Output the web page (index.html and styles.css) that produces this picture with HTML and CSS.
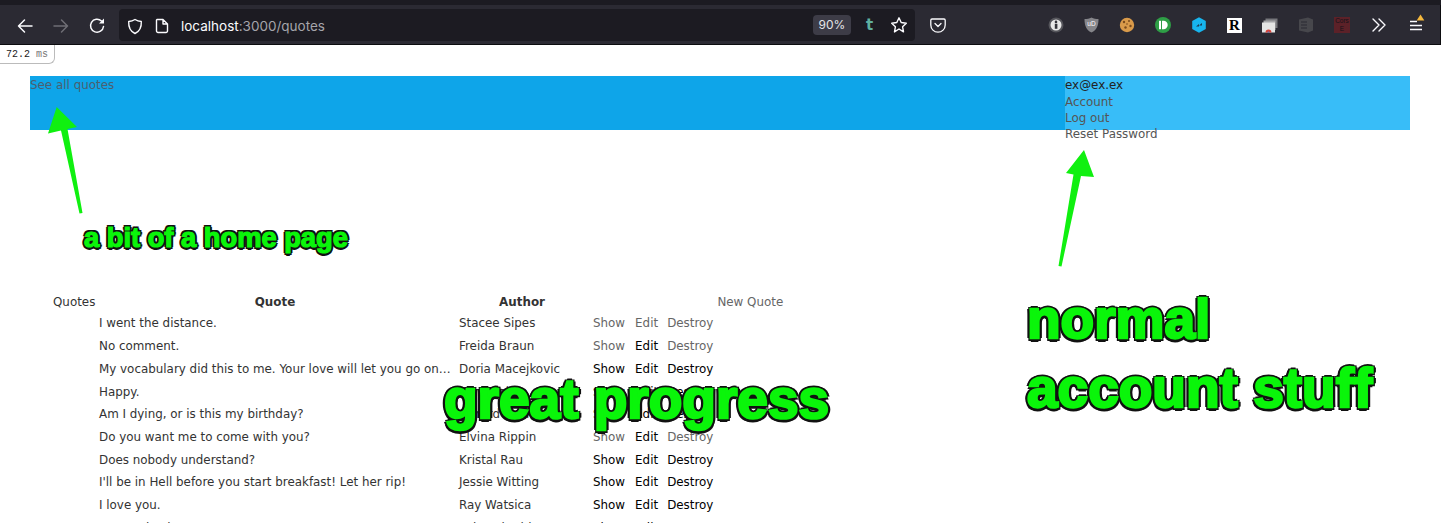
FILE: index.html
```html
<!DOCTYPE html>
<html lang="en">
<head>
    <meta charset="UTF-8">
    <meta name="viewport" content="width=device-width, initial-scale=1.0">
    <title>Quotes</title>
    <link rel="stylesheet" href="styles.css">
</head>
<body>
    <!-- browser chrome -->
    <div class="tabstrip"></div>
    <div class="toolbar">
        <svg class="tool first" width="18" height="18" viewBox="0 0 18 18" fill="none" stroke="#fbfbfe" stroke-width="1.5" stroke-linecap="round" stroke-linejoin="round"><path d="M16 9H2.5M8.5 3L2.5 9l6 6"/></svg>
        <svg class="tool" width="18" height="18" viewBox="0 0 18 18" fill="none" stroke="#6f6e75" stroke-width="1.5" stroke-linecap="round" stroke-linejoin="round"><path d="M2 9h13.5M9.500 3l6 6-6 6"/></svg>
        <svg class="tool" width="18" height="18" viewBox="0 0 18 18" fill="none" stroke="#fbfbfe" stroke-width="1.5" stroke-linecap="round"><path d="M15.5 9.5a6.5 6.5 0 1 1-2-5.500"/><path d="M16 1.500V6.500H11z" fill="#fbfbfe" stroke="none"/></svg>

        <div class="urlbar">
            <svg class="url-icon" width="16" height="17" viewBox="0 0 16 17" fill="none" stroke="#fbfbfe" stroke-width="1.4" stroke-linejoin="round"><path d="M8 1.5c2 1.300 4 1.900 6.300 2 .3 5.500-1.500 9.800-6.300 12-4.800-2.200-6.600-6.500-6.300-12 2.300-.1 4.300-.7 6.300-2z"/></svg>
            <svg class="url-icon" width="14" height="16" viewBox="0 0 14 16" fill="none" stroke="#fbfbfe" stroke-width="1.4" stroke-linejoin="round"><path d="M2 1.5h6l4.500 4.500v7a1.500 1.500 0 0 1-1.500 1.500H3A1.500 1.500 0 0 1 1.500 13V2zM8 1.500V6h4.500"/></svg>
            <div class="url-text">localhost<span class="url-dim">:3000/quotes</span></div>
            <div class="zoom-badge">90%</div>
            <div class="t-ext">t</div>
            <svg class="star" width="18" height="18" viewBox="0 0 18 18" fill="none" stroke="#fbfbfe" stroke-width="1.4" stroke-linejoin="round"><path d="M9 1.800l2.200 4.700 5.100.7-3.700 3.600.9 5.100L9 13l-4.500 2.900.9-5.100L1.700 7.200l5.100-.7z"/></svg>
        </div>

        <svg class="pocket" width="16" height="15" viewBox="0 0 16 15" fill="none" stroke="#fbfbfe" stroke-width="1.3" stroke-linecap="round" stroke-linejoin="round"><path d="M2 1h12a1.200 1.200 0 0 1 1.200 1.200V7a7.200 7.200 0 0 1-14.400 0V2.200A1.200 1.200 0 0 1 2 1z"/><path d="M5 5.500l3 3 3-3"/></svg>

        <div class="extensions">
            <svg width="16" height="16" viewBox="0 0 16 16"><circle cx="8" cy="8" r="7.500" fill="#55555b"/><circle cx="8" cy="8" r="5.500" fill="#e8e8e8"/><rect x="6.800" y="6.800" width="2.600" height="5" fill="#33333a"/><circle cx="8" cy="4.900" r="1.300" fill="#33333a"/></svg>
            <svg width="15" height="16" viewBox="0 0 15 16"><path d="M7.500.5c2.200 1 4.500 1.500 7 1.500 0 6-1.500 11-7 13.500C2 13 .5 8 .5 2c2.500 0 4.800-.5 7-1.500z" fill="#85858a"/><text x="7.500" y="9" class="ub-text">uD</text></svg>
            <svg width="16" height="16" viewBox="0 0 16 16"><circle cx="8" cy="8" r="7.200" fill="#d99a4a"/><circle cx="5" cy="5" r="1.200" fill="#7a4a1c"/><circle cx="10" cy="4" r="1" fill="#7a4a1c"/><circle cx="11.500" cy="9" r="1.200" fill="#7a4a1c"/><circle cx="6.500" cy="10.500" r="1.200" fill="#7a4a1c"/><circle cx="8" cy="7" r=".8" fill="#7a4a1c"/></svg>
            <svg width="16" height="16" viewBox="0 0 16 16"><circle cx="8" cy="8" r="8" fill="#2e9e46"/><rect x="4" y="3.800" width="2" height="8.400" fill="#fff"/><path d="M7 3.800h1.500a4.200 4.200 0 0 1 0 8.400H7z" fill="#fff"/></svg>
            <svg width="16" height="16" viewBox="0 0 16 16"><path d="M8 .3l6.800 3.800v7.800L8 15.700l-6.800-3.800V4.100z" fill="#17b5ee"/><path d="M5 9.500L8 7v2.500zM8 8.500L11 6v2.500z" fill="#1c3b55"/></svg>
            <div class="r-ext">R</div>
            <svg width="16" height="15" viewBox="0 0 16 15"><rect x="3.500" y="0.500" width="12" height="9.500" fill="#77777c"/><rect x="1.500" y="2.500" width="12" height="9.500" fill="#a5a5a8"/><rect x="0" y="4.500" width="13" height="10" fill="#e4e4e4"/><path d="M3.500 14.500a3 3 0 0 1 6 0z" fill="#d8433a"/><path d="M5.500 14.500a1 1 0 0 1 2 0z" fill="#3a7bd8"/></svg>
            <svg width="16" height="16" viewBox="0 0 16 16"><path d="M1 2.500L10 .5l5 2v11l-5 2-9-2z" fill="#47474c"/><path d="M3 5h6M3 8h6M3 11h6" stroke="#2b2a33" stroke-width="1.200"/></svg>
            <div class="cors-ext">Cors<br>E</div>
        </div>

        <svg class="chevrons" width="16" height="14" viewBox="0 0 16 14" fill="none" stroke="#fbfbfe" stroke-width="1.4" stroke-linecap="round" stroke-linejoin="round"><path d="M2 1l6 6-6 6M8 1l6 6-6 6"/></svg>
        <svg class="menu" width="16" height="18" viewBox="0 0 16 18"><path d="M1 7.500h7M1 11.500h12M1 15.500h12" stroke="#fbfbfe" stroke-width="1.4"/><path d="M11.500 0.500l3.800 6h-7.600z" fill="#f5b83d"/></svg>
    </div>

    <!-- page -->
    <div class="page">
        <div class="timing"><b>72.2</b> ms</div>

        <nav class="topbar">
            <div class="topbar-main"><a href="#">See all quotes</a></div>
            <div class="topbar-account">
                <div class="account-email">ex@ex.ex</div>
                <a href="#">Account</a>
                <a href="#">Log out</a>
                <a href="#">Reset Password</a>
            </div>
        </nav>

        <section class="quotes">
            <div class="quotes-title">Quotes</div>
            <table>
                <thead>
                    <tr><th class="quote-col">Quote</th><th class="author-col">Author</th><th></th></tr>
                </thead>
                <tbody>
                    <tr><td>I went the distance.</td><td>Stacee Sipes</td><td class="actions"><a class="seen" href="#">Show</a><a class="seen" href="#">Edit</a><a class="seen" href="#">Destroy</a></td></tr>
                    <tr><td>No comment.</td><td>Freida Braun</td><td class="actions"><a class="seen" href="#">Show</a><a href="#">Edit</a><a class="seen" href="#">Destroy</a></td></tr>
                    <tr><td>My vocabulary did this to me. Your love will let you go on…</td><td>Doria Macejkovic</td><td class="actions"><a href="#">Show</a><a href="#">Edit</a><a href="#">Destroy</a></td></tr>
                    <tr><td>Happy.</td><td>Lon Koelpin</td><td class="actions"><a href="#">Show</a><a href="#">Edit</a><a href="#">Destroy</a></td></tr>
                    <tr><td>Am I dying, or is this my birthday?</td><td>Gerard Kuhn</td><td class="actions"><a href="#">Show</a><a href="#">Edit</a><a href="#">Destroy</a></td></tr>
                    <tr><td>Do you want me to come with you?</td><td>Elvina Rippin</td><td class="actions"><a class="seen" href="#">Show</a><a href="#">Edit</a><a class="seen" href="#">Destroy</a></td></tr>
                    <tr><td>Does nobody understand?</td><td>Kristal Rau</td><td class="actions"><a href="#">Show</a><a href="#">Edit</a><a href="#">Destroy</a></td></tr>
                    <tr><td>I'll be in Hell before you start breakfast! Let her rip!</td><td>Jessie Witting</td><td class="actions"><a href="#">Show</a><a href="#">Edit</a><a href="#">Destroy</a></td></tr>
                    <tr><td>I love you.</td><td>Ray Watsica</td><td class="actions"><a href="#">Show</a><a href="#">Edit</a><a href="#">Destroy</a></td></tr>
                    <tr><td>Hey, Helmsley.</td><td>Kyle Schmidt</td><td class="actions"><a href="#">Show</a><a href="#">Edit</a><a href="#">Destroy</a></td></tr>
                </tbody>
            </table>
            <a class="new-quote" href="#">New Quote</a>
        </section>

        <!-- annotations drawn on top of the screenshot -->
        <svg class="arrows" width="1441" height="478" viewBox="0 45 1441 478">
            <path d="M56.700 107L48 133.500 61 130.500 79.500 213.500 82.500 213 67.500 129 77 127z" fill="#10f010"/>
            <path d="M1084 150L1066 173 1073.500 174.500 1058.500 266 1061.500 266.500 1081 176 1094 177z" fill="#10f010"/>
        </svg>
        <div class="note note-home">a bit of a home page</div>
        <div class="note note-progress">great progress</div>
        <div class="note note-account">normal<br>account stuff</div>
    </div>
</body>
</html>
```

FILE: styles.css
```css
html, body {
    height: 523px;
    margin: 0;
    overflow: hidden;
}

body {
    font-family: "DejaVu Sans", Verdana, sans-serif;
    font-size: 11.9px;
    line-height: 16.2px;
    color: #333;
    background-color: white;
}

a {
    color: inherit;
    text-decoration: none;
}

.tabstrip {
    height: 5px;
    background-color: #1c1b22;
}

.toolbar {
    height: 40px;
    box-sizing: border-box;
    padding-top: 1px;
    border-bottom: 1px solid #0c0c0f;
    border-right: 1px solid #0c0c0f;
    background-color: #2b2a33;
    display: flex;
    align-items: center;
}

.tool {
    margin: 2px 0 0 18px;
    flex: none;
}

.tool.first {
    margin-left: 16px;
}

.urlbar {
    margin-left: 13px;
    width: 796px;
    height: 32px;
    box-sizing: border-box;
    padding: 0 7px 0 8px;
    border-radius: 4px;
    background-color: #1c1b22;
    display: flex;
    align-items: center;
    flex: none;
}

.url-icon {
    margin: 2px 12px 0 0;
    flex: none;
}

.url-text {
    margin-top: 2px;
    font-family: Inter, "Liberation Sans", sans-serif;
    font-size: 13.5px;
    color: #fbfbfe;
    flex: 1;
}

.url-dim {
    color: #a5a5ab;
}

.zoom-badge {
    font-family: Inter, "Liberation Sans", sans-serif;
    font-size: 12px;
    color: #e4e4e8;
    background-color: #3d3c47;
    border-radius: 4px;
    width: 38px;
    height: 20px;
    line-height: 20px;
    text-align: center;
}

.t-ext {
    font-weight: bold;
    font-size: 15px;
    color: #5fb0a0;
    margin-left: 15px;
    width: 10px;
}

.star {
    margin-left: 14px;
}

.pocket {
    margin-left: 15px;
    flex: none;
}

.extensions {
    margin-left: 102px;
    display: flex;
    align-items: center;
    gap: 20px;
    width: 320px;
    flex: none;
}

.extensions svg {
    flex: none;
}

.ub-text {
    font-family: "Liberation Sans", sans-serif;
    font-size: 6.5px;
    fill: white;
    text-anchor: middle;
}

.r-ext {
    width: 15px;
    height: 15px;
    background-color: white;
    color: black;
    font-family: "Liberation Serif", serif;
    font-weight: bold;
    font-size: 15px;
    line-height: 15px;
    text-align: center;
    flex: none;
}

.cors-ext {
    width: 16px;
    height: 16px;
    background-color: #5c2128;
    color: #14131a;
    font-family: "Liberation Sans", sans-serif;
    font-size: 6.5px;
    line-height: 8px;
    text-align: center;
    flex: none;
}

.chevrons {
    margin-left: 3px;
    flex: none;
}

.menu {
    margin-left: 22px;
    margin-top: -4px;
    flex: none;
}

.page {
    position: relative;
    padding-top: 31px;
}

.timing {
    position: absolute;
    top: 0;
    left: 0;
    padding: 2px 6px 1px;
    font-family: "Liberation Mono", monospace;
    font-size: 10px;
    line-height: 15px;
    color: #777;
    background-color: white;
    border: 1px solid #bbb;
    border-width: 0 1px 1px 0;
    border-bottom-right-radius: 6px;
}

.timing b {
    font-weight: normal;
    color: #222;
}

.topbar {
    margin: 0 31px 0 30px;
    height: 54px;
    display: flex;
}

.topbar-main {
    width: 1035px;
    padding-top: 1px;
    background-color: #0ea5e9;
    color: #4b5f70;
}

.topbar-account {
    flex: 1;
    padding-top: 1.4px;
    background-color: #38bdf8;
    color: #555;
    display: flex;
    flex-direction: column;
    white-space: nowrap;
}

.account-email {
    color: #222;
}

.quotes {
    margin: 163px 0 0 53px;
    display: flex;
    align-items: flex-start;
}

.quotes-title {
    width: 42px;
    padding-top: 1px;
}

.quotes table {
    border-collapse: collapse;
}

.quotes th {
    padding: 1px 4px 2px;
    font-weight: bold;
    text-align: center;
}

.quotes td {
    padding: 3.25px 4px;
    white-space: nowrap;
}

.quote-col {
    width: 352px;
}

.author-col {
    width: 126px;
}

.actions a {
    color: black;
    margin-right: 9px;
}

.actions a:first-child {
    margin-right: 10px;
}

.actions a:last-child {
    margin-right: 0;
}

.actions a.seen {
    color: #666;
}

.new-quote {
    padding-top: 1px;
    color: #666;
}

.arrows {
    position: absolute;
    top: 0;
    left: 0;
}

/* fat green letters, black outline from the shadows */
.note {
    position: absolute;
    font-family: "Liberation Sans", Arial, sans-serif;
    font-weight: bold;
    color: #0af50a;
    white-space: nowrap;
}

.note-home {
    left: 84px;
    top: 176px;
    font-size: 27.3px;
    line-height: 34px;
    -webkit-text-stroke: 1.2px #0af50a;
    text-shadow: 2.5px 0 #111, -2.5px 0 #111, 0 2.5px #111, 0 -2.5px #111, 1.8px 1.8px #111, -1.8px 1.8px #111, 1.8px -1.8px #111, -1.8px -1.8px #111;
}

.note-progress {
    left: 444px;
    top: 323px;
    font-size: 55px;
    line-height: 62px;
    -webkit-text-stroke: 2.5px #0af50a;
    text-shadow: 3.5px 0 #111, -3.5px 0 #111, 0 3.5px #111, 0 -3.5px #111, 2.5px 2.5px #111, -2.5px 2.5px #111, 2.5px -2.5px #111, -2.5px -2.5px #111;
}

.note-account {
    left: 1027px;
    top: 240px;
    font-size: 55px;
    line-height: 69px;
    -webkit-text-stroke: 2.5px #0af50a;
    text-shadow: 3.5px 0 #111, -3.5px 0 #111, 0 3.5px #111, 0 -3.5px #111, 2.5px 2.5px #111, -2.5px 2.5px #111, 2.5px -2.5px #111, -2.5px -2.5px #111;
}
```
